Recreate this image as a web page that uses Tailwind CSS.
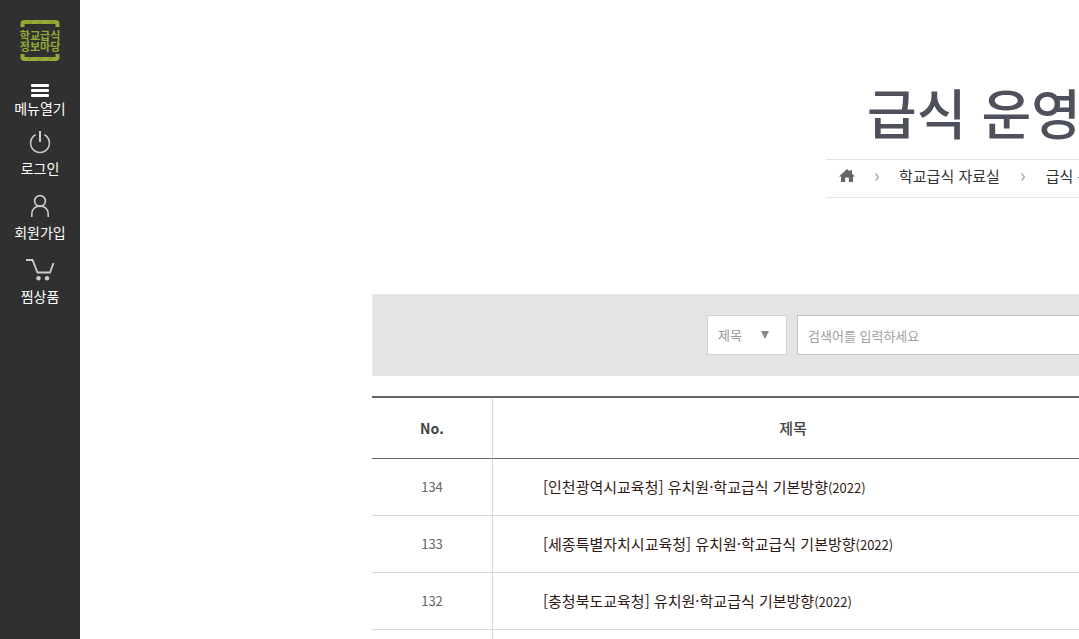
<!DOCTYPE html>
<html lang="ko">

<head>
  <meta charset="UTF-8" />
  <meta name="viewport" content="width=device-width, initial-scale=1.0" />
  <title>학교급식 정보마당</title>
  <script src="https://cdn.jsdelivr.net/npm/@tailwindcss/browser@4"></script>
</head>

<body class="flex h-screen overflow-hidden bg-white font-['Noto_Sans_CJK_KR',sans-serif] text-[15px] text-[#333]">
  <!-- 사이드바 -->
  <aside class="w-20 shrink-0 bg-[#303030] pt-5 text-sm leading-5 text-white">
    <a href="#" class="mx-auto flex h-[41px] w-10 flex-col items-center justify-between text-[11px] font-bold text-[#93ab36]">
      <svg class="h-[7px] w-10 shrink-0" viewBox="0 0 40 7" fill="none" stroke="currentColor" stroke-width="4">
        <path d="M2.5 7V4q0-2 2-2h31q2 0 2 2v3" />
        <path d="M9 4l3-3M19 4l3-3M30 4l3-3" stroke="#6f8428" stroke-width="1" />
      </svg>
      <span class="text-center leading-[11px] whitespace-nowrap">학교급식<br>정보마당</span>
      <svg class="h-[7px] w-10 shrink-0" viewBox="0 0 40 7" fill="none" stroke="currentColor" stroke-width="4">
        <path d="M2.5 0v3q0 2 2 2h31q2 0 2-2V0" />
        <path d="M8 6l3-3M19 6l3-3M29 6l3-3" stroke="#6f8428" stroke-width="1" />
      </svg>
    </a>
    <button type="button" class="mt-[23px] flex w-full flex-col items-center">
      <svg class="h-3.5 w-[18px]" viewBox="0 0 18 14" fill="white">
        <rect width="18" height="3" rx="1" />
        <rect y="5" width="18" height="3" rx="1" />
        <rect y="10" width="18" height="3" rx="1" />
      </svg>
      <span>메뉴열기</span>
    </button>
    <nav class="mt-3 flex flex-col gap-4">
      <a href="#" class="flex flex-col items-center gap-1">
        <svg class="h-6 w-[30px]" viewBox="0 0 30 24" fill="none" stroke="#ccc" stroke-width="1.6">
          <path d="M10.6 4.8a9.4 9.4 0 1 0 8.8 0" />
          <path d="M15 1v11" stroke-width="2" />
        </svg>
        <span>로그인</span>
      </a>
      <a href="#" class="flex flex-col items-center gap-1">
        <svg class="h-6 w-[30px]" viewBox="0 0 30 24" fill="none" stroke="#ccc" stroke-width="1.6">
          <circle cx="15" cy="7" r="5.4" />
          <path d="M6.8 23v-3.500a8.200 7.500 0 0 1 16.400 0V23" />
        </svg>
        <span>회원가입</span>
      </a>
      <a href="#" class="flex flex-col items-center gap-1">
        <svg class="h-6 w-[30px]" viewBox="0 0 30 24" fill="none" stroke="#ccc" stroke-width="1.8">
          <path d="M1 2h6.500l5 12.500H25L28.500 5" />
          <circle cx="13.500" cy="20.200" r="2.200" fill="#ccc" stroke="none" />
          <circle cx="22" cy="20.200" r="2.200" fill="#ccc" stroke="none" />
        </svg>
        <span>찜상품</span>
      </a>
    </nav>
  </aside>

  <main class="min-w-0 flex-1 overflow-hidden pt-[72px] pl-[292px]">
    <!-- 제목 + 현재 위치 -->
    <header class="ml-[454px] w-[310px]">
      <h1 class="pb-2 pl-[41px] text-[54px] leading-[79px] font-medium whitespace-nowrap text-[#4e515c]">급식 운영</h1>
      <nav class="flex h-[39px] items-center border-y border-[#e5e5e5] pb-1 pl-[13px] whitespace-nowrap">
        <a href="#" aria-label="홈" class="pb-0.5">
          <svg class="h-4 w-4" viewBox="0 0 16 16" fill="#666">
            <path d="M8 1l2.800 2.600V2.200H13v3.500l3 2.900h-2V14H9.800v-4.500H6.200V14H2V8.600H0z" />
          </svg>
        </a>
        <svg class="mx-5 h-2 w-1" viewBox="0 0 4 8" fill="none" stroke="#aaa" stroke-width="1.300">
          <path d="M.5 .5L3.500 4L.5 7.500" />
        </svg>
        <a href="#">학교급식 자료실</a>
        <svg class="mx-[21px] h-2 w-1" viewBox="0 0 4 8" fill="none" stroke="#aaa" stroke-width="1.300">
          <path d="M.5 .5L3.500 4L.5 7.500" />
        </svg>
        <a href="#">급식 운영</a>
      </nav>
    </header>

    <!-- 검색 -->
    <form class="mt-24 flex h-[82px] w-[1216px] items-center gap-2.5 border border-[#e9e9e9] bg-[#e4e4e4] pl-[334px] text-[13px]">
      <div class="relative">
        <select aria-label="검색 조건" class="h-10 w-20 appearance-none border border-[#d3d3d3] bg-white pl-2.5 text-[#999]">
          <option>제목</option>
        </select>
        <span class="pointer-events-none absolute top-4 right-[18px] h-2 w-2 bg-[#888] [clip-path:polygon(0_0,100%_0,50%_100%)]"></span>
      </div>
      <input type="text" aria-label="검색어" placeholder="검색어를 입력하세요"
        class="h-10 w-[360px] border border-[#c4c4c4] bg-white px-2.5 placeholder:text-[#a0a0a0]">
    </form>

    <!-- 목록 -->
    <table class="mt-5 w-[1216px] table-fixed border-separate border-spacing-0 border-t-2 border-[#666]">
      <thead>
        <tr class="h-[61px] text-[#444]">
          <th class="w-[121px] border-r border-b border-r-[#d9d9d9] border-b-[#666] text-sm font-bold">No.</th>
          <th class="w-[600px] border-b border-[#666] font-medium">제목</th>
          <th class="border-b border-[#666]"></th>
        </tr>
      </thead>
      <tbody class="[&_td]:h-[57px] [&_td]:border-b [&_td]:border-[#d9d9d9]">
        <tr>
          <td class="border-r text-center text-[13px] text-[#666]">134</td>
          <td colspan="2" class="pl-[50px]"><a href="#" class="text-[#2f1a16]">[인천광역시교육청] 유치원·학교급식 기본방향<span class="text-[13px]">(2022)</span></a></td>
        </tr>
        <tr>
          <td class="border-r text-center text-[13px] text-[#666]">133</td>
          <td colspan="2" class="pl-[50px]"><a href="#" class="text-[#2f1a16]">[세종특별자치시교육청] 유치원·학교급식 기본방향<span class="text-[13px]">(2022)</span></a></td>
        </tr>
        <tr>
          <td class="border-r text-center text-[13px] text-[#666]">132</td>
          <td colspan="2" class="pl-[50px]"><a href="#" class="text-[#2f1a16]">[충청북도교육청] 유치원·학교급식 기본방향<span class="text-[13px]">(2022)</span></a></td>
        </tr>
        <tr>
          <td class="border-r"></td>
          <td colspan="2"></td>
        </tr>
      </tbody>
    </table>
  </main>
</body>

</html>
